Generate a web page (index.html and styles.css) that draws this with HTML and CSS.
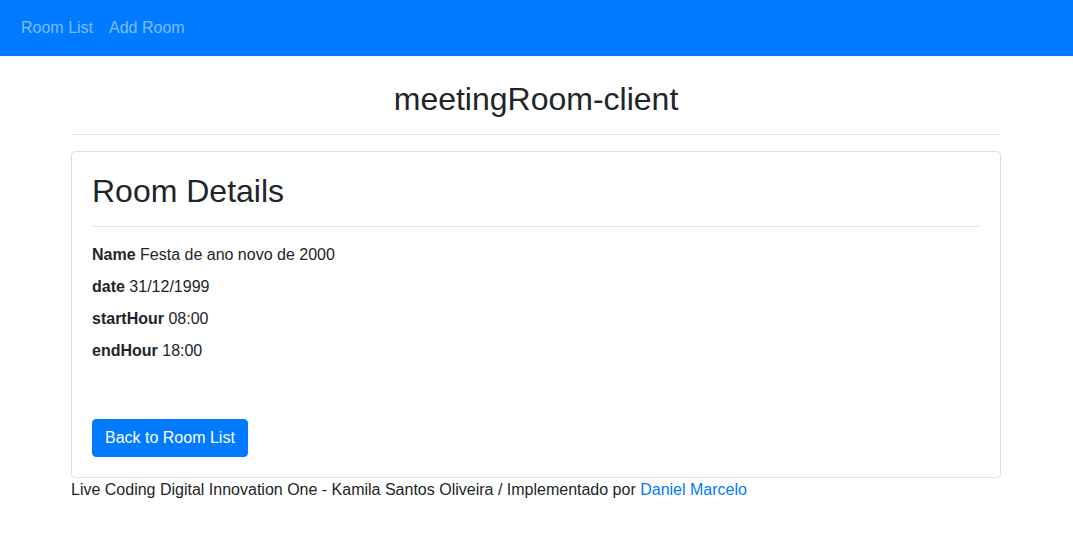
FILE: index.html
```html
<!DOCTYPE html>
<html lang="pt">
<head>
<meta charset="utf-8">
<title>meetingRoom-client</title>
<link rel="stylesheet" href="styles.css">
</head>
<body>
<nav class="navbar">
  <a class="nav-link" href="#">Room List</a>
  <a class="nav-link" href="#">Add Room</a>
</nav>
<main class="container">
  <h2 class="page-title">meetingRoom-client</h2>
  <hr class="rule">
  <section class="card">
    <h2 class="card-title">Room Details</h2>
    <hr class="rule card-rule">
    <div class="details">
      <p class="row"><b>Name</b> Festa de ano novo de 2000</p>
      <p class="row"><b>date</b> 31/12/1999</p>
      <p class="row"><b>startHour</b> 08:00</p>
      <p class="row"><b>endHour</b> 18:00</p>
    </div>
    <div class="actions">
      <button class="btn" type="button">Back to Room List</button>
    </div>
  </section>
  <footer class="footer">Live Coding Digital Innovation One - Kamila Santos Oliveira / Implementado por <a class="link" href="#">Daniel Marcelo</a></footer>
</main>
</body>
</html>
```
FILE: styles.css
```css
* { box-sizing: border-box; }
html, body { margin: 0; padding: 0; }
body {
  font-family: "Liberation Sans", Arial, Helvetica, sans-serif;
  font-size: 16px;
  line-height: 1.5;
  color: #212529;
  background: #fff;
}
.navbar {
  display: flex;
  align-items: center;
  height: 56px;
  padding: 8px 13px;
  background: #007bff;
}
.nav-link {
  display: block;
  padding: 8px;
  color: rgba(255, 255, 255, 0.5);
  text-decoration: none;
}
.container {
  width: 931px;
  padding-right: 1px;
  margin: 0 auto;
}
.page-title {
  margin: 24px 0 0;
  font-size: 32px;
  font-weight: 400;
  line-height: 1.2;
  text-align: center;
}
.rule {
  margin: 16px 0;
  border: 0;
  border-top: 1px solid rgba(0, 0, 0, 0.1);
  height: 0;
}
.card-rule {
  margin-top: 15px;
}
.card {
  border: 1px solid rgba(0, 0, 0, 0.125);
  border-radius: 4px;
  padding: 20px;
}
.card-title {
  margin: 0;
  font-size: 32px;
  font-weight: 400;
  line-height: 1.2;
}
.details {
  display: flex;
  flex-direction: column;
  gap: 8px;
}
.row { margin: 0; }
.row b { font-weight: 700; }
.actions {
  margin-top: 56px;
}
.btn {
  display: inline-block;
  font-family: inherit;
  font-size: 16px;
  line-height: 24px;
  padding: 6px 12px;
  color: #fff;
  background: #007bff;
  border: 1px solid #007bff;
  border-radius: 4px;
  cursor: pointer;
}
.footer {
  line-height: 24px;
}
.link {
  color: #007bff;
  text-decoration: none;
}
```
